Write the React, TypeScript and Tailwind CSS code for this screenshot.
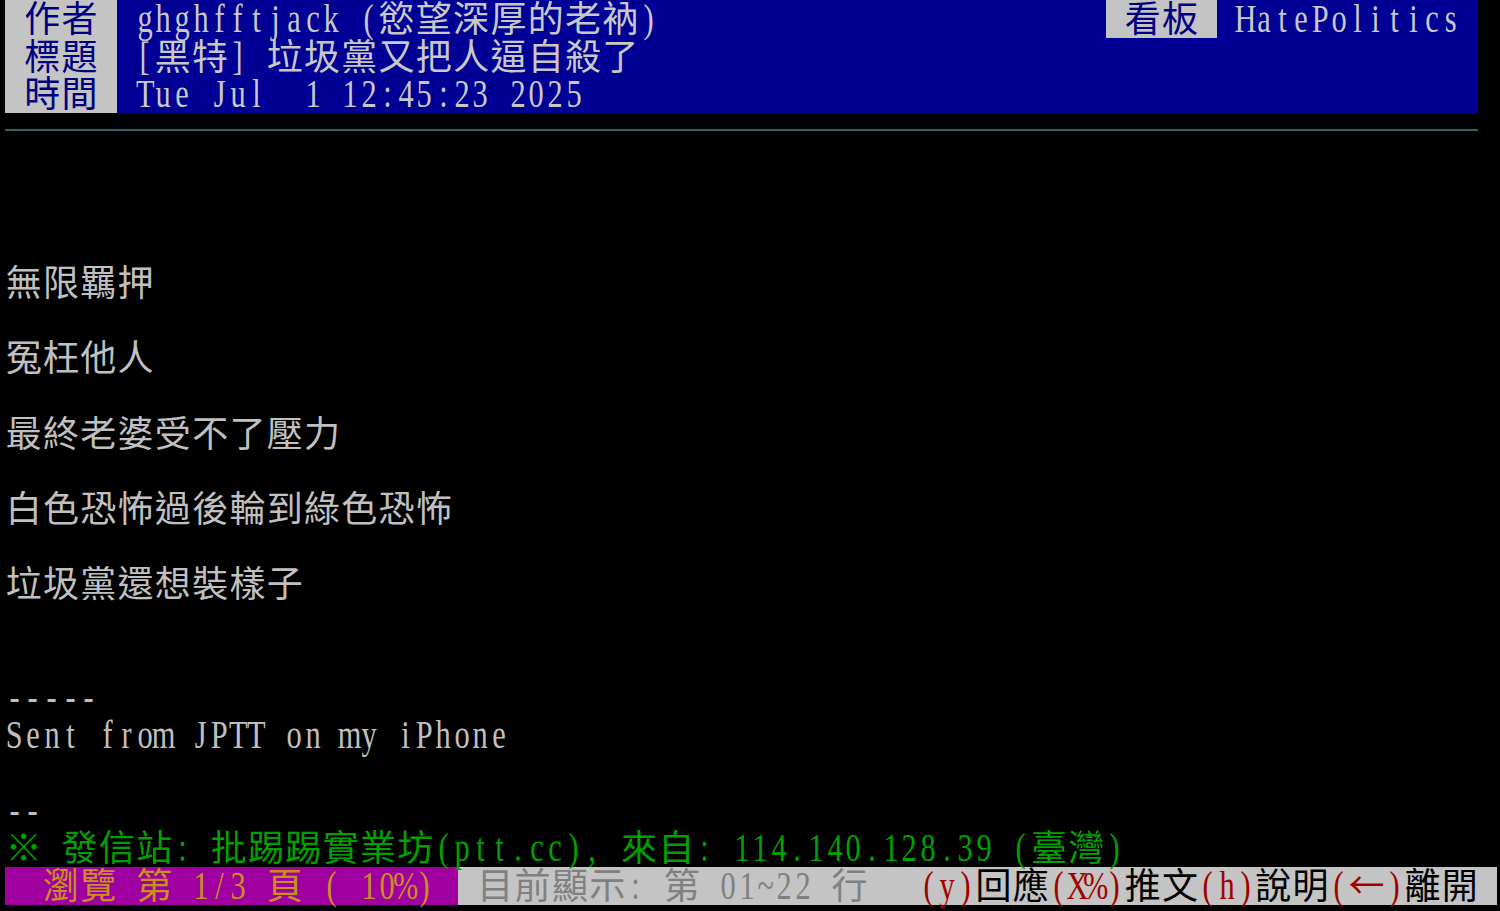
import React from "react";

const CJK = "font-['Noto_Sans_CJK_TC','Noto_Sans_CJK_SC',sans-serif]";
const LAT = "font-['Liberation_Serif',serif]";

function Cells({ text }: { text: string }) {
  return (
    <>
      {Array.from(text).map((ch, i) => {
        const wide = (ch.codePointAt(0) ?? 0) > 0x2000;
        if (wide) {
          return (
            <span key={i} className="flex w-[37.3px] shrink-0 justify-center">
              <span className={`${CJK} text-[36px] leading-[32.5px] whitespace-pre`}>{ch}</span>
            </span>
          );
        }
        return (
          <span key={i} className="flex w-[18.65px] shrink-0 justify-center">
            <span className={`${LAT} inline-block scale-x-[0.76] text-[40px] leading-[37px] whitespace-pre`}>{ch}</span>
          </span>
        );
      })}
    </>
  );
}

function Row({ children, className = "" }: { children?: React.ReactNode; className?: string }) {
  return <div className={`flex h-[37.7px] shrink-0 overflow-visible ${className}`}>{children}</div>;
}

function Label({ text }: { text: string }) {
  return (
    <div className="flex bg-[#c4c4c4] text-[#000080]">
      <Cells text={text} />
    </div>
  );
}

export default function App() {
  const body = "text-[#c0c0c0]";
  return (
    <div className="w-[1500px] h-[911px] bg-black overflow-hidden pl-[5px] flex flex-col select-none">
      {/* header */}
      <Row className="w-[1473.35px]">
        <Label text=" 作者 " />
        <div className="flex flex-1 bg-[#000094] text-[#c8c8c8]">
          <Cells text=" ghghfftjack (慾望深厚的老衲)" />
        </div>
        <Label text=" 看板 " />
        <div className="flex bg-[#000094] text-[#c8c8c8]">
          <Cells text=" HatePolitics " />
        </div>
      </Row>
      <Row className="w-[1473.35px]">
        <Label text=" 標題 " />
        <div className="flex flex-1 bg-[#000094] text-[#c8c8c8]">
          <Cells text=" [黑特] 垃圾黨又把人逼自殺了" />
        </div>
      </Row>
      <Row className="w-[1473.35px]">
        <Label text=" 時間 " />
        <div className="flex flex-1 bg-[#000094] text-[#c8c8c8]">
          <Cells text=" Tue Jul  1 12:45:23 2025" />
        </div>
      </Row>
      <Row className="w-[1473.35px] flex-col">
        <div className="mt-[16px] h-[2px] w-full bg-[#2e6464]" />
      </Row>
      <Row />
      <Row />
      <Row />
      <Row className={body}><Cells text="無限羈押" /></Row>
      <Row />
      <Row className={body}><Cells text="冤枉他人" /></Row>
      <Row />
      <Row className={body}><Cells text="最終老婆受不了壓力" /></Row>
      <Row />
      <Row className={body}><Cells text="白色恐怖過後輪到綠色恐怖" /></Row>
      <Row />
      <Row className={body}><Cells text="垃圾黨還想裝樣子" /></Row>
      <Row />
      <Row />
      <Row className={body}><Cells text="-----" /></Row>
      <Row className={body}><Cells text="Sent from JPTT on my iPhone" /></Row>
      <Row />
      <Row className={body}><Cells text="--" /></Row>
      <Row className="text-[#00a000]">
        <Cells text="※ 發信站: 批踢踢實業坊(ptt.cc), 來自: 114.140.128.39 (臺灣)" />
      </Row>
      <Row className="w-[1492px]">
        <div className="flex w-[453px] shrink-0 bg-[#a000a0] text-[#c8901e]">
          <Cells text="  瀏覽 第 1/3 頁 ( 10%)" />
        </div>
        <div className="flex flex-1 bg-[#c4c4c4]">
          <div className="flex text-[#808080]">
            <Cells text=" 目前顯示: 第 01~22 行" />
          </div>
          <div className="ml-auto flex">
            <span className="flex text-[#a00000]"><Cells text="(y)" /></span>
            <span className="flex text-black"><Cells text="回應" /></span>
            <span className="flex text-[#a00000]"><Cells text="(X%)" /></span>
            <span className="flex text-black"><Cells text="推文" /></span>
            <span className="flex text-[#a00000]"><Cells text="(h)" /></span>
            <span className="flex text-black"><Cells text="說明" /></span>
            <span className="flex text-[#a00000]"><Cells text="(←)" /></span>
            <span className="flex text-black"><Cells text="離開 " /></span>
          </div>
        </div>
      </Row>
    </div>
  );
}
